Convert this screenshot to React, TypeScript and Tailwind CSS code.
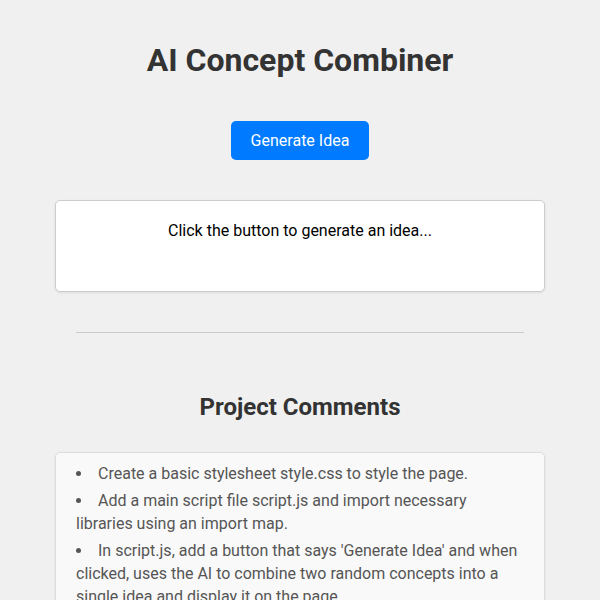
export default function App() {
  const comments = [
    'Create a basic stylesheet style.css to style the page.',
    'Add a main script file script.js and import necessary libraries using an import map.',
    "In script.js, add a button that says 'Generate Idea' and when clicked, uses the AI to combine two random concepts into a single idea and display it on the page.",
    'Style the output so the idea is easy to read.',
  ]

  return (
    <div className="min-h-screen bg-[#f0f0f0] p-5 text-center font-['Roboto',sans-serif] text-[#333]">
      <h1 className="my-[21px] pt-px text-[32px] font-bold leading-[37px]">AI Concept Combiner</h1>

      <button className="mt-[21px] rounded-[5px] bg-[#007bff] px-5 py-[10px] text-base leading-[19px] text-white">
        Generate Idea
      </button>

      <div className="mx-auto mt-[40px] min-h-[50px] w-4/5 box-content rounded-[5px] border border-[#ccc] bg-white p-5 text-base leading-[19px] text-black shadow-[0_1px_3px_rgba(0,0,0,0.08)]">
        Click the button to generate an idea...
      </div>

      <hr className="mx-auto mt-[40px] w-4/5 border-t border-[#ccc]" />

      <h2 className="mt-[60px] text-2xl font-bold leading-[28px]">Project Comments</h2>

      <div className="mx-auto mt-[31px] w-4/5 box-content rounded-[5px] border border-[#ddd] bg-[#f9f9f9] px-5 pt-[9px] pb-5 text-left text-[#555] shadow-[0_1px_3px_rgba(0,0,0,0.06)]">
        <ul className="list-inside list-disc">
          {comments.map((c) => (
            <li key={c} className="mb-[4px] text-base leading-[23px]">
              {c}
            </li>
          ))}
        </ul>
      </div>
    </div>
  )
}
